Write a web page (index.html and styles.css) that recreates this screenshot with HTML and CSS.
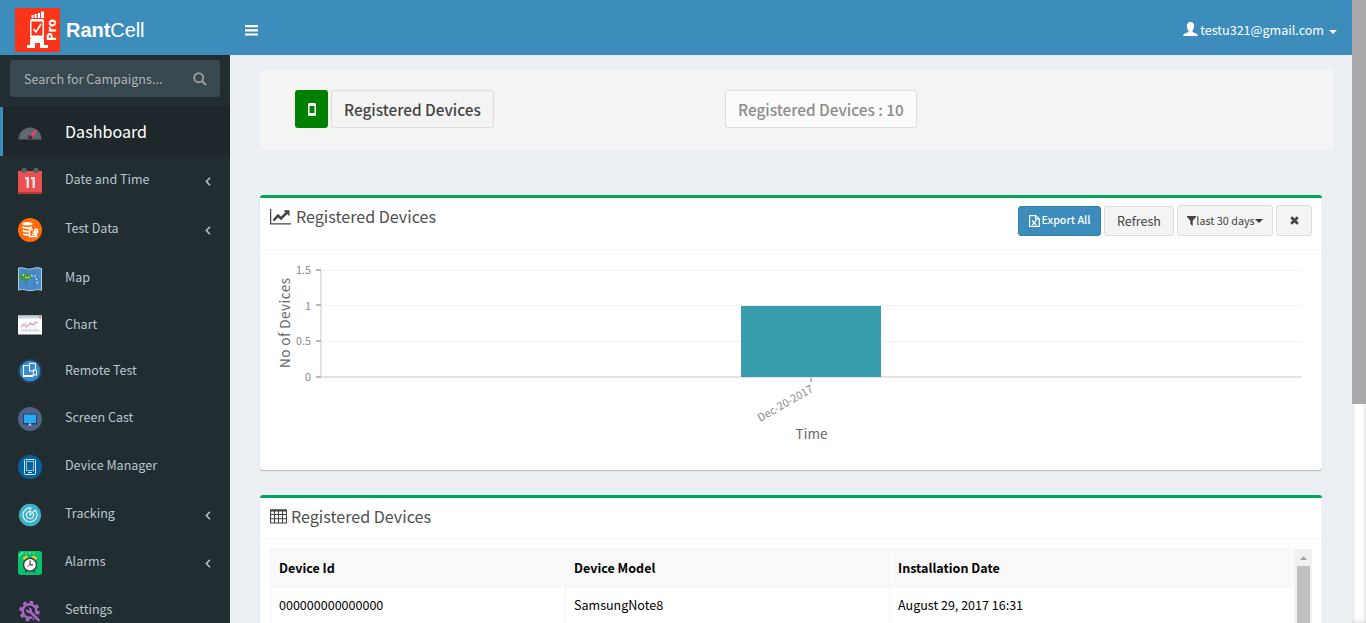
FILE: index.html
```html
<!DOCTYPE html>
<html lang="en">
<head>
<meta charset="utf-8">
<title>RantCell</title>
<link rel="stylesheet" href="styles.css">
</head>
<body>
<div class="app">
  <header class="topbar">
    <a class="brand">
      <svg class="brand-logo" width="45" height="44" viewBox="0 0 45 44">
        <rect width="45" height="44" fill="#fa3419"/>
        <g fill="#fff">
          <path d="M16.500 7h2v3h-2zM19.500 6h2.300v4h-2.300zM22.800 5h2.300v5h-2.300zM26 3.500h3V10h-3z"/>
          <path d="M17 11h10q2 0 2 2v16q0 2-2 2H17q-2 0-2-2V13q0-2 2-2z"/>
          <path d="M15 31h14v6h4v3h-8v-5h-5v5h-8v-3h3z"/>
        </g>
        <path d="M16.500 13.500h11v14h-11z" fill="#fa3419"/>
        <path d="M18.500 21l2.500 3 5-8" stroke="#fff" stroke-width="1.600" fill="none"/>
        <text class="logo-pro" transform="translate(41 33) rotate(-90)" textLength="22" lengthAdjust="spacingAndGlyphs">Pro</text>
      </svg>
      <span class="brand-name"><b>Rant</b>Cell</span>
    </a>
    <svg class="burger" width="13" height="11" viewBox="0 0 13 11"><path d="M0 0h13v2.200H0zM0 4.200h13v2.200H0zM0 8.400h13v2.200H0z" fill="#fff"/></svg>
    <div class="user">
      <svg width="15" height="15" viewBox="0 0 15 15"><path d="M7.500 0c2.300 0 3.600 1.600 3.600 4 0 2-.7 3.600-1.600 4.500v1.300c.4 1 5.300 1.600 5.300 3.700V14H.2v-.500c0-2.100 4.900-2.700 5.300-3.700V8.500C4.600 7.600 3.900 6 3.900 4c0-2.400 1.300-4 3.600-4z" fill="#fff"/></svg>
      <span class="user-mail">testu321@gmail.com</span>
      <i class="caret"></i>
    </div>
  </header>

  <div class="body">
    <aside class="sidebar">
      <div class="search">
        <span>Search for Campaigns...</span>
        <svg width="14" height="14" viewBox="0 0 14 14" fill="none" stroke="#999"><circle cx="5.700" cy="5.700" r="4.500" stroke-width="2"/><path d="M9 9l4 4" stroke-width="2.300"/></svg>
      </div>
      <nav class="menu">
        <a class="item active">
          <svg class="icon" viewBox="0 0 24 24"><path d="M.5 17.500a11.500 12 0 0 1 23 0z" fill="#5d666c"/><path d="M4 16a8.500 8.500 0 0 1 16 0" stroke="#707a80" stroke-width="1.500" stroke-dasharray="1.500 1.500" fill="none"/><path d="M10.500 15L17.500 7.500l1.500 1L14 17z" fill="#e5426c"/><path d="M10 17.500v-2a2.200 2.200 0 0 1 4.400 0v2z" fill="#45323a"/></svg>
          <span>Dashboard</span>
        </a>
        <a class="item h49">
          <svg class="icon tall" viewBox="0 0 24 26"><path d="M0 3h24v23H0z" fill="#e9504f"/><path d="M0 24h24v2H0z" fill="#b63a3a"/><rect x="3.500" y="0" width="5" height="5" rx="1.500" fill="#596366"/><rect x="15.500" y="0" width="5" height="5" rx="1.500" fill="#596366"/><path d="M7 9h4v11H8.500v-8.500H7zM13 9h4v11h-2.500v-8.500H13z" fill="#f0dede"/></svg>
          <span>Date and Time</span>
          <svg class="arrow" viewBox="0 0 6 9"><path d="M5 .8L1.300 4.500 5 8.200"/></svg>
        </a>
        <a class="item h49">
          <svg class="icon" viewBox="0 0 24 24"><circle cx="12" cy="12" r="12" fill="#ff6c09"/><g fill="#fff"><ellipse cx="9.500" cy="5.800" rx="5" ry="1.700"/><path d="M4.500 8q5 2.200 9.500.5v1.800q-5 1.700-9.500-.3zM4.800 11.500q3 1.400 6 1.200v1.800q-3 .2-6-1zM5.200 15.200q2.500 1 5.600.8v1.600q-3 .4-5.600-.6z"/></g><path d="M15 11.500h-3.500v7h7V15M14.500 14h5v-2.500h-2.500v5h-3" fill="none" stroke="#fff" stroke-width="1.500"/></svg>
          <span>Test Data</span>
          <svg class="arrow" viewBox="0 0 6 9"><path d="M5 .8L1.300 4.500 5 8.200"/></svg>
        </a>
        <a class="item h48">
          <svg class="icon" viewBox="0 0 24 24"><path d="M.5 1q4-1 7.500.8 4 1 7.500-.5 4-1.500 8 .2v21.800q-4-1.500-8 0-4 1-7.500-.3-4-1.500-7.500.2z" fill="#498bca" stroke="#acd0df"/><path d="M8 2v21M16 2v21" stroke="#377bb9" stroke-width="1"/><path d="M1 9q2-3 7-3 3 0 6 3 1 3-4 4-2 3-5 0-4 0-4-2z" fill="#429343"/><path d="M5 7.500l4 4 3.500-2.500 4-.5 2 4 1 4" stroke="#e9f4f0" stroke-width="1.300" stroke-dasharray="1.500 2" fill="none"/></svg>
          <span>Map</span>
        </a>
        <a class="item h45">
          <svg class="icon" viewBox="0 0 24 24"><path d="M0 2.500h24v19H0z" fill="#fff"/><path d="M0 2.500h24v3H0z" fill="#c5d2d9"/><circle cx="22" cy="4" r=".9" fill="#e55"/><path d="M3 16.500h18v2H3z" fill="#d7d8d9"/><path d="M8 8v9M12.500 8v9M17 8v9" stroke="#ddd"/><path d="M3 14l3-3 2.500 3 4-4 2 2 2.500-2 3-1" fill="none" stroke="#d195c7" stroke-width="1.100"/></svg>
          <span>Chart</span>
        </a>
        <a class="item h47">
          <svg class="icon" viewBox="0 0 24 24"><circle cx="12" cy="12" r="12" fill="#20435d"/><circle cx="12" cy="12" r="10.300" fill="#3889cf"/><g fill="none" stroke="#fff" stroke-width="1.100"><path d="M11 6.500H5.500v11h9v-2M11.500 4.200h6V10M11.500 4.200V12h4"/><rect x="15.500" y="11" width="3" height="5"/></g><path d="M5 16h10v2H5z" fill="#fff"/></svg>
          <span>Remote Test</span>
        </a>
        <a class="item h48">
          <svg class="icon" viewBox="0 0 24 24"><circle cx="12" cy="12" r="12" fill="#4d6389"/><rect x="5" y="6.500" width="14" height="11" rx="1" fill="#2c4059"/><path d="M6 7.500h12v8.500H6z" fill="#25a9f8"/><path d="M11 16.500h2v1l1 1h-4l1-1z" fill="#c9d2da"/></svg>
          <span>Screen Cast</span>
        </a>
        <a class="item h48">
          <svg class="icon" viewBox="0 0 24 24"><circle cx="12" cy="12" r="12" fill="#04629f"/><g fill="none" stroke="#d8eaf5"><rect x="6.500" y="4.500" width="11" height="15" rx="1"/><rect x="8.500" y="6.500" width="7" height="9" stroke-opacity=".7"/><path d="M10 17.500h4"/></g></svg>
          <span>Device Manager</span>
        </a>
        <a class="item h48">
          <svg class="icon" viewBox="0 0 24 24"><circle cx="12" cy="12" r="11.200" fill="#3caec7"/><g fill="none" stroke="#e3f6f9" stroke-width="1.100"><path d="M14 5.200a7 7 0 1 0 3 1.800l-5 5M13.500 8.700a3.600 3.600 0 1 0 1.500 1.300"/><path d="M12 5V13"/></g></svg>
          <span>Tracking</span>
          <svg class="arrow" viewBox="0 0 6 9"><path d="M5 .8L1.300 4.500 5 8.200"/></svg>
        </a>
        <a class="item h48">
          <svg class="icon" viewBox="0 0 24 24"><rect width="24" height="24" rx="3" fill="#09c16d"/><path d="M1 4l3-3h2L1 6z" fill="#5df3a5"/><path d="M5 8q0-3 4-3.500l1 2-3 2.500zM19 8q0-3-4-3.500l-1 2 3 2.500z" fill="#f3c81d"/><path d="M8 1.500l1 1.500M12 1v2M16 1.500L15 3" stroke="#9df0c5"/><path d="M8.500 19l-1 2.500M15.500 19l1 2.500" stroke="#2b3e46" stroke-width="1.500"/><circle cx="12" cy="13.700" r="6.500" fill="#fff" stroke="#344451" stroke-width="1.500"/><path d="M12 9.500v4.300h3" stroke="#344451" fill="none" stroke-width="1.200"/><path d="M12 13.800l-3 2" stroke="#e65050"/></svg>
          <span>Alarms</span>
          <svg class="arrow" viewBox="0 0 6 9"><path d="M5 .8L1.300 4.500 5 8.200"/></svg>
        </a>
        <a class="item h48">
          <svg class="icon" viewBox="0 0 24 24"><circle cx="11.500" cy="12" r="8.700" fill="none" stroke="#a567c0" stroke-width="3.200" stroke-dasharray="3.500 3.330"/><circle cx="11.500" cy="12" r="6.800" fill="none" stroke="#a567c0" stroke-width="2.600"/><path d="M12 12.500l9 9" stroke="#222d32" stroke-width="5"/><path d="M12 12.500l8.500 8.500" stroke="#a567c0" stroke-width="2.600" stroke-linecap="round"/><circle cx="11" cy="11.300" r="2.900" fill="#a567c0"/><path d="M8 8l3 3" stroke="#222d32" stroke-width="2"/></svg>
          <span>Settings</span>
        </a>
      </nav>
    </aside>

    <main class="content">
      <section class="summary">
        <div class="summary-left">
          <span class="device-tile"><svg width="8" height="13" viewBox="0 0 8 13"><path d="M1.500 0h5Q8 0 8 1.500v10Q8 13 6.500 13h-5Q0 13 0 11.500v-10Q0 0 1.500 0zM1.500 3v7h5V3z" fill="#fff" fill-rule="evenodd"/></svg></span>
          <span class="label-btn">Registered Devices</span>
        </div>
        <span class="label-btn count">Registered Devices : 10</span>
      </section>

      <section class="box chart-box">
        <div class="box-head">
          <svg class="title-icon" width="21" height="16" viewBox="0 0 21 16"><path d="M.6 0v14.900H21" fill="none" stroke="#444" stroke-width="1.300"/><path d="M3.500 11.500l4.500-5 3 3L17 3.500" fill="none" stroke="#444" stroke-width="2.500"/><path d="M13.500 1.200h6v6z" fill="#444"/></svg>
          <h3>Registered Devices</h3>
          <div class="tools">
            <span class="btn primary"><svg width="11" height="12" viewBox="0 0 11 12"><path d="M.6.6h6l3.700 3.200v7.600H.6zM6.500.6v3.500h4" fill="none" stroke="#fff" stroke-width="1.200"/><path d="M3.200 5.500l4 4.500m0-4.500l-4 4.500" stroke="#fff" stroke-width="1.200"/></svg><span>Export All</span></span>
            <span class="btn refresh">Refresh</span>
            <span class="btn range"><svg width="9" height="10" viewBox="0 0 9 10"><path d="M0 0h9v1L5.700 4.700V10L3.300 8V4.700L0 1z" fill="#444"/></svg><span>last 30 days</span><i class="caret dark"></i></span>
            <span class="btn close"><svg width="9" height="9" viewBox="0 0 9 9"><path d="M1.200 1.200l6.600 6.600m0-6.600L1.200 7.800" stroke="#444" stroke-width="2.700"/></svg></span>
          </div>
        </div>
        <svg class="chart" width="1062" height="220" viewBox="0 0 1062 220">
          <g class="grid"><path d="M63 20.500h979M63 55.500h979M63 91.500h979"/></g>
          <path d="M61 20v108M60 127h982" stroke="#e3e3e3" stroke-width="2" fill="none"/>
          <path d="M56 20h5M56 55h5M56 91h5M56 127h5M551 128v4" stroke="#b5b5b5" stroke-width="2"/>
          <rect x="481" y="56" width="140" height="71" fill="#389eae"/>
          <g class="ticks" text-anchor="end">
            <text x="51" y="24">1.5</text><text x="51" y="60">1</text><text x="51" y="95">0.5</text><text x="51" y="131">0</text>
            <text transform="translate(554 141) rotate(-30)" textLength="62">Dec-20-2017</text>
          </g>
          <g class="axis-title">
            <text transform="translate(30 118) rotate(-90)" textLength="90">No of Devices</text>
            <text x="535.500" y="189" textLength="32">Time</text>
          </g>
        </svg>
      </section>

      <section class="box table-box">
        <div class="box-head">
          <svg class="title-icon" width="17" height="15" viewBox="0 0 17 15"><path d="M.6 1h15.800v13H.6zM.6 5.500h15.800M.6 9.700h15.800M4.500 2v12M8.500 2v12M12.500 2v12" fill="none" stroke="#444" stroke-width="1.100"/><path d="M0 .5h17v2H0z" fill="#444"/></svg>
          <h3>Registered Devices</h3>
        </div>
        <div class="table-wrap">
          <div class="table">
            <div class="row head"><span>Device Id</span><span>Device Model</span><span>Installation Date</span></div>
            <div class="row"><span>000000000000000</span><span>SamsungNote8</span><span>August 29, 2017 16:31</span></div>
          </div>
          <div class="inner-scroll">
            <svg width="17" height="17" viewBox="0 0 17 17"><path d="M5 11h7L8.500 7z" fill="#a3a3a3"/></svg>
            <div class="inner-thumb"></div>
          </div>
        </div>
      </section>
    </main>
  </div>
</div>
<div class="page-scroll"><div class="page-thumb"></div></div>
</body>
</html>
```

FILE: styles.css
```css
* { box-sizing: border-box; }
body {
  margin: 0;
  width: 1366px;
  height: 623px;
  overflow: hidden;
  display: flex;
  background: #ecf0f5;
  color: #333;
  font-family: "Noto Sans CJK SC", "Noto Sans", sans-serif;
  font-size: 12.54px;
  line-height: 20px;
}
svg { display: block; flex: none; }
span, h3 { white-space: nowrap; }
.app { width: 1352px; height: 623px; display: flex; flex-direction: column; overflow: hidden; }

.topbar { height: 55px; flex: none; display: flex; align-items: center; background: #3c8dbc; color: #fff; }
.brand { width: 245px; height: 55px; padding: 8px 0 0 15px; display: flex; gap: 6px; }
.brand-name { font: 20px/44px "Liberation Sans", Arial, sans-serif; letter-spacing: -.05px; }
.logo-pro { font: bold 12px "DejaVu Sans", sans-serif; fill: #fff; }
.burger { margin-top: 5px; }
.user { margin-left: auto; padding: 5px 15px 0 0; display: flex; align-items: center; }
.user svg { margin: -2px 2px 0 0; }
.user-mail { letter-spacing: .02px; }
.caret { border: 4px solid transparent; border-top-color: #fff; border-bottom: 0; margin: 3px 0 0 5px; }
.caret.dark { border-top-color: #333; margin: 1px 0 0; }

.body { flex: 1; display: flex; min-height: 0; }
.sidebar { width: 230px; flex: none; background: #222d32; overflow: hidden; }
.search {
  height: 37px; margin: 5px 10px 10px; padding: 0 13px 0 14px; border-radius: 3px;
  display: flex; align-items: center; justify-content: space-between;
  background: #374850; color: #b0b4b6; letter-spacing: .03px;
}
.menu { display: flex; flex-direction: column; }
.item { display: flex; align-items: center; flex: none; padding: 0 19px 0 15px; border-left: 3px solid transparent; color: #b8c7ce; }
.item span { padding-bottom: 2px; }
.h49 { height: 49px; }
.h49 span { padding-bottom: 4px; }
.h48 { height: 48px; }
.h47 { height: 47px; }
.h45 { height: 45px; }
.active { height: 49px; background: #1e282c; border-left-color: #3c8dbc; color: #fff; font-size: 16.1px; }
.icon { width: 24px; height: 24px; margin: 1px 23px 0 0; }
.active .icon { margin-top: 4px; }
.icon.tall { height: 26px; margin-top: 1px; }
.arrow { width: 6px; height: 9px; margin: 2px 0 0 auto; fill: none; stroke: #b8c7ce; stroke-width: 1.5; }

.content { flex: 1; padding: 15px 19px 0 30px; overflow: hidden; }
.summary { height: 80px; padding: 20px 35px; border-radius: 4px; background: #f4f4f4; display: grid; grid-template-columns: 430px auto; justify-content: start; }
.summary-left { display: flex; gap: 3px; }
.device-tile { width: 33px; height: 38px; border-radius: 3px; background: #008000; display: flex; align-items: center; justify-content: center; }
.label-btn { height: 38px; padding: 0 12px; border: 1px solid #ddd; border-radius: 3px; font-size: 15.33px; font-weight: 500; line-height: 36px; color: #444; }
.count { background: #fbfbfb; color: #8c8c8c; }

.box { width: 1062px; border-top: 3px solid #00a65a; border-radius: 3px; background: #fff; box-shadow: 0 1px 1px rgba(0,0,0,.25); }
.chart-box { margin-top: 45px; height: 275px; }
.table-box { margin-top: 25px; height: 180px; }
.box-head { display: flex; align-items: flex-start; padding: 10px 10px 0; border-bottom: 1px solid #f4f4f4; }
.chart-box .box-head { height: 52px; }
.table-box .box-head { height: 41px; }
.title-icon { margin: 1px 4px 0 0; }
.chart-box .title-icon { margin-right: 5px; }
h3 { margin: -1px 0 0; font-size: 16.1px; font-weight: 400; line-height: 18px; color: #505050; }
.tools { margin: -3px 0 0 auto; display: flex; gap: 3px; align-items: flex-end; }
.btn { height: 30px; display: flex; align-items: center; justify-content: center; border: 1px solid #ddd; border-radius: 3px; background: #f4f4f4; color: #444; }
.btn span { margin-top: -2px; }
.primary { width: 83px; gap: 2px; background: #3c8dbc; border-color: #367fa9; color: #fff; font-size: 10.7px; font-weight: 500; }
.refresh { width: 70px; }
.range { width: 96px; height: 31px; font-size: 10.8px; }
.close { width: 36px; height: 31px; }

.grid { stroke: #f2f2f2; }
.ticks { font-size: 10.75px; fill: #888; }
.axis-title { font-size: 13.5px; fill: #666; }

.table-wrap { display: flex; margin: 10px 10px 0; height: 140px; }
.table { width: 1025px; border: 1px solid #f4f4f4; border-right: 0; color: #000; }
.row { display: grid; grid-template-columns: 295px 324px 1fr; height: 37px; border-bottom: 1px solid #f4f4f4; }
.row span { padding: 0 8px; line-height: 35px; border-right: 1px solid #f4f4f4; }
.head { background: #f9f9f9; font-weight: 700; }
.inner-scroll { width: 17px; background: #f1f1f1; }
.inner-thumb { width: 13px; height: 123px; margin: 0 auto; background: #c1c1c1; }

.page-scroll { width: 14px; background: #fff; box-shadow: inset 0 0 5px #ccc; }
.page-thumb { height: 404px; background: #a8a8a8; }
```
